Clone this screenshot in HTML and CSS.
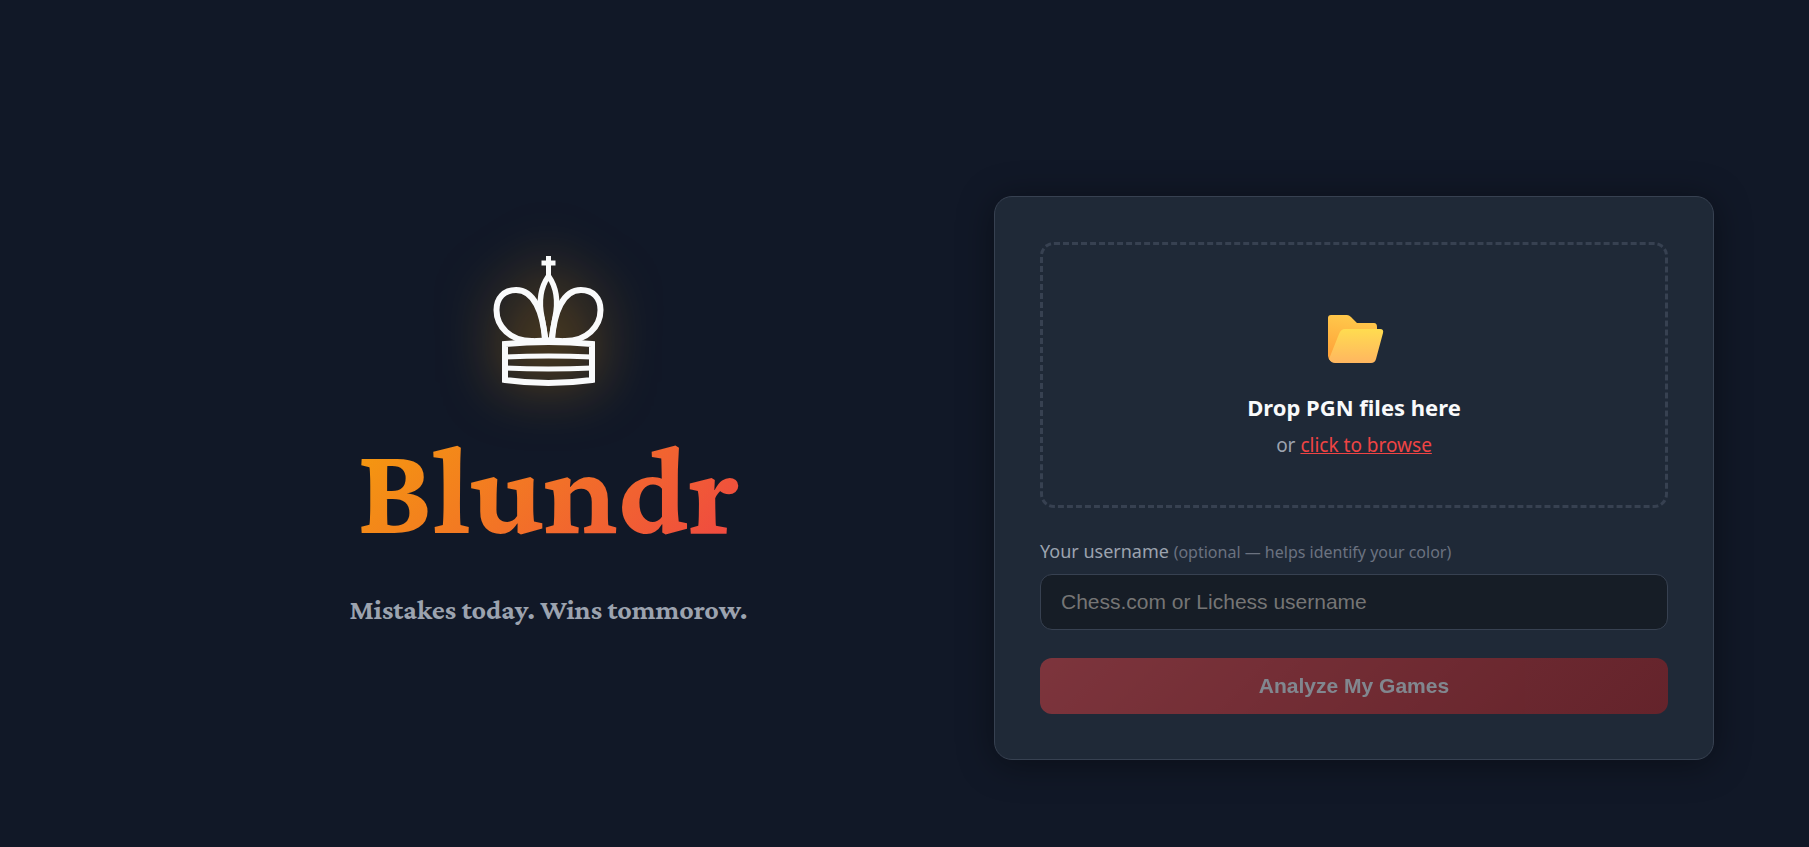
FILE: index.html
```
<!DOCTYPE html>
<html lang="en">
<head>
  <meta charset="UTF-8">
  <meta name="viewport" content="width=device-width, initial-scale=1.0">
  <title>Blundr</title>
  <link rel="stylesheet" href="styles.css">
</head>
<body>
  <main class="landing">
    <section class="hero">
      <svg class="hero-king" viewBox="0 0 110 130" fill="none" stroke="#f9fafb" stroke-width="6" aria-hidden="true">
        <path d="M54.5 0V20M47.5 7H61.5" stroke-width="5"/>
        <path d="M54.5 20C46 32 45 48 48 62L52 85H57L61 62C64 48 63 32 54.5 20Z" stroke-width="5.5"/>
        <path d="M40 85C16 86 2.5 70 2.5 54C2.5 42 10 34 22 34C40 34 49 56 51 84"/>
        <path d="M69 85C93 86 106.500 70 106.500 54C106.500 42 99 34 87 34C69 34 60 56 58 84"/>
        <path d="M11 88Q54.500 84 98 88V124Q54.500 130 11 124Z"/>
        <path d="M30 85Q54.500 82 79 85" stroke-width="4"/>
        <path d="M11 101Q54.500 99 98 101M11 112Q54.500 114 98 112" stroke-width="5"/>
      </svg>
      <h1 class="hero-title">Blundr</h1>
      <p class="hero-tagline">Mistakes today. Wins tommorow.</p>
    </section>

    <form class="card">
      <button type="button" class="dropzone">
        <svg class="dropzone-icon" viewBox="0 0 56 48" aria-hidden="true">
          <defs>
            <linearGradient id="folder-back" x1="0.4" y1="0" x2="0.2" y2="1">
              <stop offset="0" stop-color="#ffc94b"/>
              <stop offset="1" stop-color="#ff9f38"/>
            </linearGradient>
            <linearGradient id="folder-front" x1="0" y1="0" x2="0" y2="1">
              <stop offset="0" stop-color="#ffdc50"/>
              <stop offset="1" stop-color="#ffb660"/>
            </linearGradient>
          </defs>
          <g transform="translate(1 0)">
            <path d="M4 0H20Q22 0 24 2L30 8H47Q50 8 50 12V30L4 46Q1 44 1 41V3Q1 0 4 0Z" fill="url(#folder-back)"/>
            <path d="M18 14H53Q57 14 56 18L49 44Q48 48 44 48H8Q4 48 2 44L12 19Q14 14 18 14Z" fill="url(#folder-front)"/>
          </g>
        </svg>
        <span class="dropzone-title">Drop PGN files here</span>
        <span class="dropzone-sub">or <span class="dropzone-link">click to browse</span></span>
      </button>

      <label class="field-label" for="username">Your username <span class="field-hint">(optional — helps identify your color)</span></label>
      <input class="field-input" type="text" id="username" placeholder="Chess.com or Lichess username">

      <button type="submit" class="analyze-btn" disabled>Analyze My Games</button>
    </form>
  </main>
</body>
</html>
```
FILE: styles.css
```
* {
  margin: 0;
  padding: 0;
  box-sizing: border-box;
}

body {
  font-family: "Segoe UI", "Noto Sans", "Open Sans", sans-serif;
  background-color: #111827;
  color: #f9fafb;
}

.landing {
  display: flex;
  align-items: center;
  min-height: 100vh;
  padding: 108px 95px 0 103px;
}

/* Left side */
.hero {
  flex: 1;
  display: flex;
  flex-direction: column;
  align-items: center;
  padding-bottom: 70px;
}

.hero-king {
  width: 110px;
  height: 130px;
  overflow: visible;
  filter: drop-shadow(0 0 28px rgba(245, 158, 11, 0.6));
}

.hero-title {
  margin-top: 31px;
  font-family: "Crimson Pro", "Liberation Serif", serif;
  font-size: 129px;
  font-weight: 700;
  line-height: 144px;
  background: linear-gradient(135deg, #f59e0b, #ef4444);
  -webkit-background-clip: text;
  background-clip: text;
  color: transparent;
}

.hero-tagline {
  margin-top: 29px;
  font-family: "Crimson Pro", "Liberation Serif", serif;
  font-size: 28px;
  font-weight: 700;
  line-height: 40px;
  color: #9ca3af;
}

/* Upload card */
.card {
  flex: 0 1 720px;
  display: flex;
  flex-direction: column;
  padding: 45px;
  background-color: #1f2937;
  border: 1px solid #374151;
  border-radius: 18px;
  box-shadow: 0 4px 36px rgba(0, 0, 0, 0.4);
}

.dropzone {
  display: flex;
  flex-direction: column;
  align-items: center;
  padding: 70px 24px 41px;
  font-family: inherit;
  color: inherit;
  background: transparent;
  border: 3px dashed #374151;
  border-radius: 14px;
  cursor: pointer;
}

.dropzone-icon {
  width: 56px;
  height: 48px;
  overflow: visible;
}

.dropzone-title {
  margin-top: 25px;
  font-size: 22px;
  font-weight: 700;
  line-height: 38px;
}

.dropzone-sub {
  font-size: 19px;
  line-height: 38px;
  color: #9ca3af;
}

.dropzone-link {
  color: #ef4444;
  text-decoration: underline;
}

.field-label {
  margin: 28px 0 7px;
  font-size: 18px;
  line-height: 30px;
  color: #9ca3af;
}

.field-hint {
  font-size: 16px;
  color: #6b7280;
}

.field-input {
  width: 100%;
  height: 56px;
  padding: 0 20px;
  font-family: Arial, "Liberation Sans", sans-serif;
  font-size: 21px;
  color: #f9fafb;
  background-color: #161d26;
  border: 1px solid #374151;
  border-radius: 12px;
}

.field-input::placeholder {
  color: #757575;
}

.analyze-btn {
  height: 56px;
  margin-top: 28px;
  font-family: Arial, "Liberation Sans", sans-serif;
  font-size: 21px;
  font-weight: 700;
  color: #f9fafb;
  background: linear-gradient(135deg, #ef4444, #b91c1c);
  border: none;
  border-radius: 12px;
}

.analyze-btn:disabled {
  opacity: 0.45;
  cursor: not-allowed;
}

@media (max-width: 1100px) {
  .landing {
    flex-direction: column;
    gap: 48px;
    padding: 48px 24px;
  }

  .hero {
    padding-bottom: 0;
  }

  .card {
    flex: none;
    width: 100%;
  }
}
```
